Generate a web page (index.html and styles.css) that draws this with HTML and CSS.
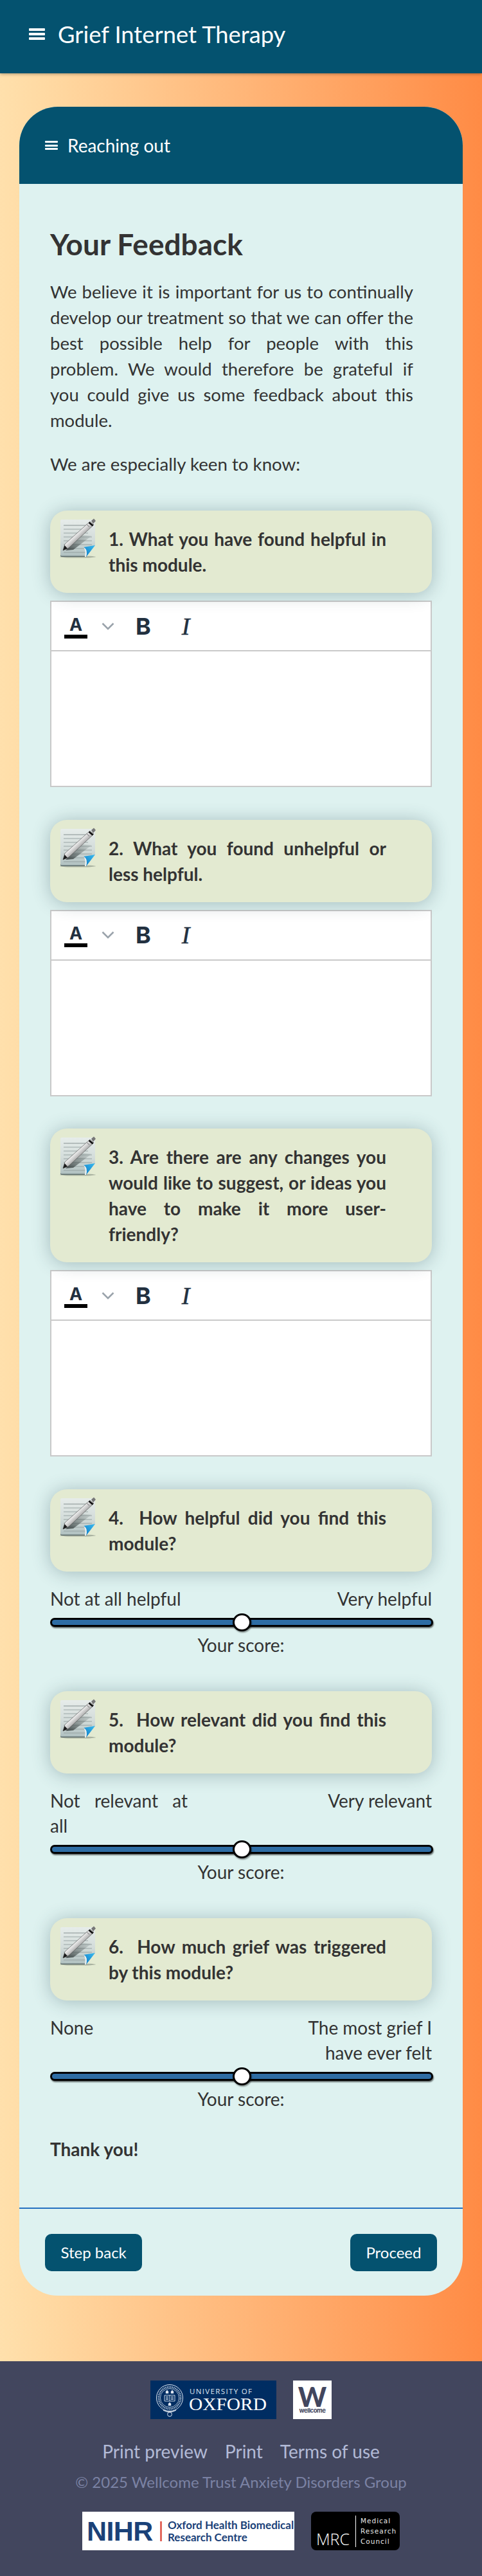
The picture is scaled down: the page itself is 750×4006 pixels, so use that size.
FILE: index.html
```html
<!DOCTYPE html>
<html lang="en">
<head>
<meta charset="utf-8">
<title>Grief Internet Therapy</title>
<link rel="stylesheet" href="styles.css">
</head>
<body>
<svg class="defs" width="0" height="0" aria-hidden="true">
  <defs>
    <linearGradient id="sheet" x1="0" y1="0" x2="0" y2="1"><stop offset="0" stop-color="#e6ecea"/><stop offset=".55" stop-color="#d3dcda"/><stop offset="1" stop-color="#aebfbf"/></linearGradient>
    <linearGradient id="barrel" x1="0" y1="0" x2="1" y2="1"><stop offset="0" stop-color="#cfcfcf"/><stop offset=".42" stop-color="#f5f5f5"/><stop offset=".62" stop-color="#8d8d8d"/><stop offset="1" stop-color="#2e2e2e"/></linearGradient>
    <linearGradient id="curl" x1="0" y1="1" x2="1" y2="0"><stop offset="0" stop-color="#0a78c4"/><stop offset="1" stop-color="#3bbcf0"/></linearGradient>
    <linearGradient id="penshade" x1="0" y1="1" x2="1" y2="0"><stop offset="0" stop-color="#2b3232" stop-opacity=".85"/><stop offset="1" stop-color="#5d6a6a" stop-opacity=".05"/></linearGradient>
    <symbol id="note" viewBox="0 0 56 62">
      <ellipse cx="28" cy="60" rx="28" ry="1.6" fill="#6f7a70" opacity=".5"/>
      <path d="M1 4 Q1 2 3 2 H55 V42 L41 60 H3 Q1 60 1 58 Z" fill="url(#sheet)"/>
      <path d="M1 57 Q1 60 3 60 H41 L42 58.6 H3 Q2 58.6 1 57 Z" fill="#5f6e6e"/>
      <g stroke="#8b9898" stroke-width=".8">
        <path d="M6 11H44" stroke="#6f7b7b"/><path d="M6 17H44"/><path d="M6 23H44"/><path d="M6 29H50"/><path d="M6 35H50"/><path d="M6 41H50"/><path d="M6 47H46"/><path d="M6 53H42"/>
      </g>
      <path d="M9 50 L35 26 L50 27 L21 49 Z" fill="url(#penshade)"/>
      <path d="M5 50 L8 40 L47 5 L53 10 L14 46 Z" fill="url(#barrel)" stroke="#4a4a4a" stroke-width=".6"/>
      <path d="M5 50 L7.5 42 L12 47 Z" fill="#1c1c1c"/>
      <path d="M42 9.5 L46 13.5" stroke="#6a6a6a" stroke-width="1"/>
      <path d="M49 4 L53 0.5 L56 4 L52 8.5 Z" fill="#777"/>
      <path d="M45.5 6.5 L51.5 11.5" stroke="#0d0d0d" stroke-width="2.6"/>
      <path d="M55 42 L41 60 Q44 48 37 45 Z" fill="url(#curl)"/>
      <path d="M37 45 Q44 48 41 60 L39 60 Q41 50 37 45 Z" fill="#eef3f3"/>
    </symbol>
  </defs>
</svg>

<header class="topbar">
  <span class="burger burger-lg"><i></i><i></i><i></i></span>
  <span class="brand">Grief Internet Therapy</span>
</header>

<main class="stage">
  <article class="card">
    <div class="card-head">
      <span class="burger"><i></i><i></i><i></i></span>
      <span class="card-title">Reaching out</span>
    </div>
    <div class="card-body">
      <h1 class="page-title">Your Feedback</h1>
      <p class="intro">We believe it is important for us to continually develop our treatment so that we can offer the best possible help for people with this problem. We would therefore be grateful if you could give us some feedback about this module.</p>
      <p class="keen">We are especially keen to know:</p>

      <section class="question q-text">
        <div class="callout"><svg class="note"><use href="#note"/></svg><p>1. What you have found helpful in this module.</p></div>
        <div class="editor">
          <div class="toolbar">
            <span class="tool-color">A</span>
            <svg class="chev" viewBox="0 0 20 12"><path d="M1.5 1.5 L10 10 L18.5 1.5" fill="none" stroke="#9aa3ab" stroke-width="2.6"/></svg>
            <span class="tool-b">B</span>
            <span class="tool-i">I</span>
          </div>
          <div class="edit-area"></div>
        </div>
      </section>

      <section class="question q-text">
        <div class="callout"><svg class="note"><use href="#note"/></svg><p>2. What you found unhelpful or less helpful.</p></div>
        <div class="editor">
          <div class="toolbar">
            <span class="tool-color">A</span>
            <svg class="chev" viewBox="0 0 20 12"><path d="M1.5 1.5 L10 10 L18.5 1.5" fill="none" stroke="#9aa3ab" stroke-width="2.6"/></svg>
            <span class="tool-b">B</span>
            <span class="tool-i">I</span>
          </div>
          <div class="edit-area"></div>
        </div>
      </section>

      <section class="question q-text">
        <div class="callout"><svg class="note"><use href="#note"/></svg><p>3. Are there are any changes you would like to suggest, or ideas you have to make it more user-friendly?</p></div>
        <div class="editor">
          <div class="toolbar">
            <span class="tool-color">A</span>
            <svg class="chev" viewBox="0 0 20 12"><path d="M1.5 1.5 L10 10 L18.5 1.5" fill="none" stroke="#9aa3ab" stroke-width="2.6"/></svg>
            <span class="tool-b">B</span>
            <span class="tool-i">I</span>
          </div>
          <div class="edit-area"></div>
        </div>
      </section>

      <section class="question q-scale">
        <div class="callout"><svg class="note"><use href="#note"/></svg><p>4. &nbsp;How helpful did you find this module?</p></div>
        <div class="scale-labels"><span class="lo">Not at all helpful</span><span class="hi">Very helpful</span></div>
        <input class="slider" type="range" min="0" max="10" value="5" aria-label="How helpful">
        <p class="score">Your score:</p>
      </section>

      <section class="question q-scale">
        <div class="callout"><svg class="note"><use href="#note"/></svg><p>5. &nbsp;How relevant did you find this module?</p></div>
        <div class="scale-labels"><span class="lo">Not relevant at all</span><span class="hi">Very relevant</span></div>
        <input class="slider" type="range" min="0" max="10" value="5" aria-label="How relevant">
        <p class="score">Your score:</p>
      </section>

      <section class="question q-scale">
        <div class="callout"><svg class="note"><use href="#note"/></svg><p>6. &nbsp;How much grief was triggered by this module?</p></div>
        <div class="scale-labels"><span class="lo">None</span><span class="hi">The most grief I have ever felt</span></div>
        <input class="slider" type="range" min="0" max="10" value="5" aria-label="How much grief">
        <p class="score">Your score:</p>
      </section>

      <p class="thanks">Thank you!</p>
    </div>
    <nav class="card-foot">
      <a class="btn" href="#">Step back</a>
      <a class="btn" href="#">Proceed</a>
    </nav>
  </article>
</main>

<footer class="site-foot">
  <div class="logos">
    <svg class="logo-oxford" viewBox="0 0 196 60" role="img" aria-label="University of Oxford">
      <rect width="196" height="60" fill="#002d62"/>
      <g fill="none" stroke="#dfe6f0">
        <circle cx="30" cy="27" r="20.5" stroke-width="1"/>
        <circle cx="30" cy="27" r="17" stroke-width="3" stroke-dasharray="1.4 1.2" opacity=".75"/>
        <circle cx="30" cy="27" r="14.5" stroke-width=".7"/>
        <path d="M20 46 Q30 52 40 46" stroke-width="1.4"/>
        <circle cx="30" cy="52.5" r="3.4" stroke-width="1"/>
        <path d="M22 23h16v9h-16z M30 23v9 M24 25.5h4 M24 27.5h4 M24 29.5h4 M32 25.5h4 M32 27.5h4 M32 29.5h4" stroke-width=".9"/>
        <path d="M24 17l2-2 2 2v3h-4z M32 17l2-2 2 2v3h-4z M28 36l2-2 2 2v3h-4z" fill="#dfe6f0" stroke-width=".4"/>
      </g>
      <text class="ox-small" x="61" y="21" textLength="97" lengthAdjust="spacing">UNIVERSITY OF</text>
      <text class="ox-big" x="60" y="46" textLength="121" lengthAdjust="spacingAndGlyphs">OXFORD</text>
    </svg>
    <div class="logo-wellcome" role="img" aria-label="Wellcome">
      <span class="w-mark">W</span>
      <span class="w-word">wellcome</span>
    </div>
  </div>
  <div class="foot-links">
    <a href="#">Print preview</a>
    <a href="#">Print</a>
    <a href="#">Terms of use</a>
  </div>
  <p class="copyright">© 2025 Wellcome Trust Anxiety Disorders Group</p>
  <div class="logos">
    <div class="logo-nihr">
      <span class="nihr-mark">NIHR</span>
      <span class="nihr-rule"></span>
      <span class="nihr-text">Oxford Health Biomedical<br>Research Centre</span>
    </div>
    <div class="logo-mrc">
      <span class="mrc-mark">MRC</span>
      <span class="mrc-rule"></span>
      <span class="mrc-text">Medical<br>Research<br>Council</span>
    </div>
  </div>
</footer>
</body>
</html>
```
FILE: styles.css
```css
* { box-sizing: border-box; }
html, body { margin: 0; padding: 0; }
body {
  font-family: Lato, "Open Sans", sans-serif;
  font-size: 28px;
  line-height: 40px;
  color: #333;
  background: #42465e;
}
.defs { position: absolute; }
p, h1 { margin: 0; }
a { color: inherit; text-decoration: none; }

.topbar {
  height: 114px;
  background: #04526f;
  color: #fff;
  display: flex;
  align-items: center;
  padding: 0 0 8px 45px;
  gap: 20px;
  box-shadow: 0 1px 5px rgba(0,0,0,.35);
  position: relative;
}
.brand { font-size: 36.3px; line-height: 50px; }
.burger { display: flex; flex-direction: column; justify-content: space-between; width: 20px; height: 14px; }
.burger i { display: block; height: 3px; background: #fff; border-radius: 1px; }
.burger-lg { width: 25px; height: 18px; }
.burger-lg i { height: 4px; }

.stage {
  padding: 52px 30px 102px;
  background: linear-gradient(to right, #ffe0ac 0%, #ffd9a2 10%, #ff8b45 100%);
}
.card { border-radius: 60px; overflow: hidden; background: #def2f0; }
.card-head {
  height: 120px;
  background: #04526f;
  color: #fff;
  display: flex;
  align-items: center;
  gap: 15px;
  padding: 0 0 0 40px;
}
.card-title { font-size: 28px; }
.card-body { padding: 66px 48px 71px; }
.page-title { font-size: 46px; line-height: 56px; font-weight: 700; color: #333; }
.intro { width: 565px; margin-top: 26px; text-align: justify; font-size: 27.5px; }
.keen { margin-top: 28px; font-size: 27.7px; }

.question { margin-top: 52px; }
.question.q-text + .question { margin-top: 50.5px; }
.callout {
  display: flex;
  gap: 20px;
  padding: 24px 71px 24px 15px;
  background: #e3ead1;
  border-radius: 26px;
  box-shadow: 0 2px 28px rgba(40,70,80,.32);
  font-weight: 700;
  text-align: justify;
  position: relative;
}
.note { flex: none; width: 56px; height: 62px; margin-top: -12px; }
.callout p { flex: 1; }

.editor { margin-top: 12px; border: 2px solid #c9c9c9; background: #fff; }
.toolbar {
  height: 77px;
  display: flex;
  align-items: center;
  padding-left: 20px;
  border-bottom: 2px solid #c9c9c9;
  color: #22303f;
  position: relative;
}
.tool-color {
  width: 36px; height: 38px;
  font: 700 27px/34px Inter, "DejaVu Sans", sans-serif;
  text-align: center;
  border-bottom: 6px solid #000;
}
.chev { width: 20px; height: 12px; margin-left: 22px; }
.tool-b { font: 700 36px/40px Inter, "DejaVu Sans", sans-serif; margin-left: 33px; }
.tool-i { font: italic 400 38px/40px "Liberation Serif", serif; margin-left: 48px; -webkit-text-stroke: .5px #22303f; }
.edit-area { height: 209px; background: #fff; }

.scale-labels { display: flex; justify-content: space-between; margin-top: 23px; line-height: 39px; }
.lo, .hi { width: 214px; }
.lo { text-align: justify; }
.hi { text-align: right; }
.slider {
  -webkit-appearance: none;
  appearance: none;
  display: block;
  width: 596px;
  height: 28px;
  margin: 3px 0 0;
  padding: 0;
  background: transparent;
}
.slider::-webkit-slider-runnable-track {
  height: 14px;
  background: #2e6da4;
  border: 3px solid #000;
  border-radius: 7px;
  box-shadow: 1px 2px 2px rgba(0,0,0,.55);
}
.slider::-webkit-slider-thumb {
  -webkit-appearance: none;
  width: 29px;
  height: 28px;
  margin-top: -10px;
  background: #fff;
  border: 3px solid #000;
  border-radius: 50%;
  box-shadow: 1px 2px 2px rgba(0,0,0,.4);
}
.score { text-align: center; margin-top: 1px; }
.thanks { font-weight: 700; margin-top: 38px; }

.card-foot {
  display: flex;
  justify-content: space-between;
  padding: 39px 40px 38.5px;
  border-top: 2px solid #2470c0;
}
.btn {
  height: 58px;
  padding: 0 24.5px;
  display: flex;
  align-items: center;
  background: #04526f;
  color: #fff;
  font-size: 24px;
  border-radius: 10px;
}

.site-foot { padding: 30px 0 40px; background: #42465e; text-align: center; }
.logos { display: flex; justify-content: center; gap: 26px; }
.logo-oxford { width: 196px; height: 60px; display: block; }
.ox-small { font: 400 11.5px "Open Sans", sans-serif; fill: #dfe6f0; }
.ox-big { font: 400 28px "Liberation Serif", serif; fill: #fff; }
.logo-wellcome {
  width: 60px; height: 60px;
  background: #fff;
  color: #42465e;
  display: flex;
  flex-direction: column;
  align-items: center;
}
.w-mark { font: 900 42px/30px Lato, sans-serif; margin-top: 10px; }
.w-word { font: 700 9.5px/11px Inter, sans-serif; letter-spacing: -.45px; margin-top: 1px; }

.foot-links { display: flex; justify-content: center; gap: 27px; margin-top: 30px; color: #b2bad6; font-size: 28px; }
.copyright { margin-top: 8px; color: #7b82a4; font-size: 24px; }
.copyright + .logos { margin-top: 26px; }

.logo-nihr {
  width: 330px; height: 60px;
  background: #fff;
  display: flex;
  align-items: center;
  padding-left: 7px;
  color: #1a4178;
}
.nihr-mark { font: 700 43px/1 "Liberation Sans", sans-serif; width: 114px; text-align: left; letter-spacing: -.6px; }
.nihr-rule { width: 3px; height: 31px; background: #e2675c; margin-right: 9px; }
.nihr-text { font: 700 17px/19px Lato, sans-serif; text-align: left; white-space: nowrap; }
.logo-mrc {
  width: 138px; height: 60px;
  background: #000;
  border-radius: 8px;
  color: #fff;
  display: flex;
  align-items: center;
  padding-left: 8px;
}
.mrc-mark { font: 300 25px/1 "Open Sans", sans-serif; width: 54px; text-align: left; align-self: flex-end; margin-bottom: 5px; }
.mrc-rule { width: 1px; height: 49px; background: #fff; margin: 0 7px; }
.mrc-text { font: 400 10.5px/16px "DejaVu Sans", sans-serif; letter-spacing: 1px; text-align: left; color: #e8e8e8; white-space: nowrap; }
```
